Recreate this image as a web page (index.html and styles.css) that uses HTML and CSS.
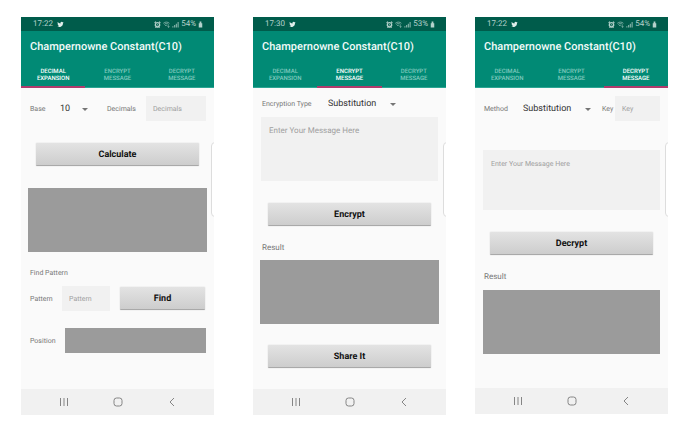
FILE: index.html
```html
<!DOCTYPE html>
<html lang="en">
<head>
<meta charset="utf-8">
<meta name="viewport" content="width=device-width, initial-scale=1">
<title>Champernowne Constant(C10)</title>
<link rel="stylesheet" href="styles.css">
</head>
<body>
<svg class="sprite" aria-hidden="true">
  <symbol id="bird" viewBox="0 0 24 24"><path d="M23 5.1c-.8.4-1.700.6-2.600.7.9-.6 1.600-1.400 2-2.500-.9.500-1.800.9-2.900 1.100A4.500 4.500 0 0 0 11.800 8.500C8 8.300 4.700 6.500 2.500 3.800c-1.200 2.100-.6 4.700 1.400 6-.7 0-1.400-.2-2-.6 0 2.200 1.500 4.100 3.600 4.500-.7.2-1.400.2-2 .1.600 1.800 2.200 3.100 4.200 3.100A9 9 0 0 1 1 18.800 12.800 12.800 0 0 0 20.700 7.400c.9-.6 1.700-1.400 2.300-2.300z"/></symbol>
  <symbol id="alarm" viewBox="0 0 24 24"><path fill-rule="evenodd" d="M1 5l4-4 3 2-5 5zM23 5l-4-4-3 2 5 5zM12 3a10 10 0 0 1 7 17l2 3h-3l-2-1a10 10 0 0 1-8 0l-2 1H3l2-3A10 10 0 0 1 12 3zm0 5a5 5 0 1 0 0 10 5 5 0 0 0 0-10zm-1 2h2v3l2 2-1 1-3-2z"/></symbol>
  <symbol id="wifi" viewBox="0 0 24 24"><path d="M1 8a15 15 0 0 1 21 0M4 12a10 10 0 0 1 15 0M7 16a6 6 0 0 1 8 0M19 15v7M16 19l3 3 3-3" fill="none" stroke="currentColor" stroke-width="3"/></symbol>
  <symbol id="signal" viewBox="0 0 24 24"><path d="M1 18h4v4H1zM7 14h4v8H7zM13 9h4v13h-4zM19 3h4v19h-4z"/></symbol>
  <symbol id="battery" viewBox="0 0 14 24"><path d="M4 2h6v6h3v14H1V8h3z"/></symbol>
  <symbol id="recents" viewBox="0 0 10 10"><path d="M1.500 1v8M5 1v8M8.500 1v8"/></symbol>
  <symbol id="home" viewBox="0 0 10 10"><rect x="1" y="1" width="8" height="8" rx="2.500"/></symbol>
  <symbol id="back" viewBox="0 0 10 10"><path d="M7 1L3 5l4 4"/></symbol>
</svg>
<main class="gallery">

  <section class="phone phone-expansion">
    <header class="status">
      <span>17:22</span><svg class="bird"><use href="#bird"/></svg>
      <span class="status-right"><svg><use href="#alarm"/></svg><svg class="dim"><use href="#wifi"/></svg><svg class="dim"><use href="#signal"/></svg><span>54%</span><svg class="battery"><use href="#battery"/></svg></span>
    </header>
    <h2 class="app-title">Champernowne Constant(C10)</h2>
    <nav class="tabs">
      <button class="tab active">Decimal<br>Expansion</button>
      <button class="tab">Encrypt<br>Message</button>
      <button class="tab">Decrypt<br>Message</button>
    </nav>
    <div class="content">
      <div class="row row-base">
        <label for="base">Base</label>
        <span class="picker picker-short"><select id="base"><option>10</option></select></span>
        <label for="decimals">Decimals</label>
        <input id="decimals" class="field" placeholder="Decimals">
      </div>
      <button class="action">Calculate</button>
      <output class="output"></output>
      <h3 class="section-label small">Find Pattern</h3>
      <div class="row row-pattern">
        <label for="pattern">Pattern</label>
        <input id="pattern" class="field" placeholder="Pattern">
        <button class="action">Find</button>
      </div>
      <div class="row row-position">
        <label for="position">Position</label>
        <output id="position" class="output"></output>
      </div>
    </div>
    <footer class="navbar">
      <button aria-label="Recent apps"><svg><use href="#recents"/></svg></button>
      <button aria-label="Home"><svg><use href="#home"/></svg></button>
      <button aria-label="Back"><svg><use href="#back"/></svg></button>
    </footer>
    <span class="edge-handle"></span>
  </section>

  <section class="phone phone-encrypt">
    <header class="status">
      <span>17:30</span><svg class="bird"><use href="#bird"/></svg>
      <span class="status-right"><svg><use href="#alarm"/></svg><svg class="dim"><use href="#wifi"/></svg><svg class="dim"><use href="#signal"/></svg><span>53%</span><svg class="battery"><use href="#battery"/></svg></span>
    </header>
    <h2 class="app-title">Champernowne Constant(C10)</h2>
    <nav class="tabs">
      <button class="tab">Decimal<br>Expansion</button>
      <button class="tab active">Encrypt<br>Message</button>
      <button class="tab">Decrypt<br>Message</button>
    </nav>
    <div class="content">
      <div class="row row-type">
        <label for="type">Encryption Type</label>
        <span class="picker"><select id="type"><option>Substitution</option></select></span>
      </div>
      <textarea class="message" aria-label="Message" placeholder="Enter Your Message Here"></textarea>
      <button class="action">Encrypt</button>
      <h3 class="section-label">Result</h3>
      <output class="output"></output>
      <button class="action">Share It</button>
    </div>
    <footer class="navbar">
      <button aria-label="Recent apps"><svg><use href="#recents"/></svg></button>
      <button aria-label="Home"><svg><use href="#home"/></svg></button>
      <button aria-label="Back"><svg><use href="#back"/></svg></button>
    </footer>
    <span class="edge-handle"></span>
  </section>

  <section class="phone phone-decrypt">
    <header class="status">
      <span>17:22</span><svg class="bird"><use href="#bird"/></svg>
      <span class="status-right"><svg><use href="#alarm"/></svg><svg class="dim"><use href="#wifi"/></svg><svg class="dim"><use href="#signal"/></svg><span>54%</span><svg class="battery"><use href="#battery"/></svg></span>
    </header>
    <h2 class="app-title">Champernowne Constant(C10)</h2>
    <nav class="tabs">
      <button class="tab">Decimal<br>Expansion</button>
      <button class="tab">Encrypt<br>Message</button>
      <button class="tab active">Decrypt<br>Message</button>
    </nav>
    <div class="content">
      <div class="row row-method">
        <label for="method">Method</label>
        <span class="picker"><select id="method"><option>Substitution</option></select></span>
        <label for="key">Key</label>
        <input id="key" class="field" placeholder="Key">
      </div>
      <textarea class="message" aria-label="Message" placeholder="Enter Your Message Here"></textarea>
      <button class="action">Decrypt</button>
      <h3 class="section-label">Result</h3>
      <output class="output"></output>
    </div>
    <footer class="navbar">
      <button aria-label="Recent apps"><svg><use href="#recents"/></svg></button>
      <button aria-label="Home"><svg><use href="#home"/></svg></button>
      <button aria-label="Back"><svg><use href="#back"/></svg></button>
    </footer>
    <span class="edge-handle"></span>
  </section>

</main>
</body>
</html>
```
FILE: styles.css
```css
* {
  box-sizing: border-box;
}

body {
  margin: 0;
  background: #fff;
  color: #777;
  font: 7px/10px Roboto, "Liberation Sans", sans-serif;
  text-rendering: geometricPrecision;
}

button,
input,
select,
textarea {
  margin: 0;
  padding: 0;
  border: 0;
  border-radius: 0;
  background: none;
  color: inherit;
  font: inherit;
  text-rendering: inherit;
}

h2,
h3 {
  margin: 0;
  font-weight: 400;
}

.sprite {
  display: none;
}

.gallery {
  display: flex;
  align-items: flex-start;
  padding: 17px 20px 11px 21px;
}

.phone {
  position: relative;
  flex: 1;
  min-width: 0;
  overflow: hidden;
  background: #fafafa;
}

.phone-expansion {
  margin-right: 39px;
}

.phone-encrypt {
  margin-right: 29px;
}

/* Status bar, title and tabs */

.status {
  display: flex;
  align-items: center;
  gap: 4px;
  height: 14px;
  padding: 0 11px 0 12px;
  background: #005c4b;
  color: #b5d2cc;
  font-size: 8px;
}

.status svg {
  width: 7px;
  height: 7px;
  fill: currentColor;
}

.status .bird {
  color: #e0eeeb;
}

.status .dim {
  color: #7fb0a6;
}

.status .battery {
  width: 5px;
}

.status-right {
  display: flex;
  align-items: center;
  gap: 2px;
  margin-left: auto;
}

.app-title {
  padding: 8px 9px 6px;
  background: #018a75;
  color: #f4fbfa;
  font-size: 11px;
  font-weight: 500;
  line-height: 16px;
  white-space: nowrap;
}

.tabs {
  display: grid;
  grid-template-columns: repeat(3, 1fr);
  background: #018a75;
}

.tab {
  padding: 7px 0 5px;
  border-bottom: 1px solid #2ba593;
  color: #80c9be;
  font-size: 6px;
  font-weight: 500;
  line-height: 7px;
  text-transform: uppercase;
}

.tab.active {
  padding-bottom: 4px;
  border-bottom: 2px solid #b03a6c;
  color: #fff;
}

/* Form */

.content {
  display: flex;
  flex-direction: column;
  padding: 8px 7px 0;
}

.row {
  display: grid;
  align-items: center;
  padding: 0 1px 0 2px;
}

.row-base {
  grid-template-columns: 30px 47px 39px 1fr;
}

.row-type {
  grid-template-columns: 66px 1fr;
  height: 15px;
}

.row-method {
  grid-template-columns: 39px 79px 13px 1fr;
}

.row-pattern {
  grid-template-columns: 32px 48px 1fr;
  margin-top: 8px;
}

.row-position {
  grid-template-columns: 35px 1fr;
  margin-top: 17px;
}

.picker {
  position: relative;
  width: 70px;
  color: #333;
  font-size: 9px;
}

.picker-short {
  width: 30px;
}

.picker select {
  display: block;
  width: 100%;
  appearance: none;
}

.picker::after {
  content: "";
  position: absolute;
  top: 4px;
  right: 2px;
  border: 3px solid transparent;
  border-top-color: #757575;
  border-bottom: 0;
  pointer-events: none;
}

.field {
  width: 100%;
  min-width: 0;
  height: 25px;
  padding: 0 7px;
  background: #f1f1f1;
}

.message {
  display: block;
  height: 64px;
  margin: 6px 1px 0;
  padding: 9px 8px;
  background: #f1f1f1;
  font-size: 8px;
  resize: none;
}

.field::placeholder,
.message::placeholder {
  color: #a0a0a0;
  opacity: 1;
}

.action {
  height: 23px;
  margin: 22px 8px 0;
  padding-top: 1px;
  border-bottom: 1px solid #a9a9a9;
  border-radius: 1px;
  background: linear-gradient(#e3e3e3, #cdcdcd);
  box-shadow: 0 0 1px #aaa;
  color: #111;
  font-size: 9px;
  font-weight: 700;
}

.output {
  display: block;
  height: 64px;
  background: #9b9b9b;
}

.section-label {
  padding: 0 2px;
  font-size: 8px;
}

.section-label.small {
  margin-top: 16px;
  font-size: 7px;
}

.phone-expansion .content {
  padding-bottom: 36px;
}

.phone-expansion .content > .output {
  margin-top: 22px;
}

.row-pattern .action {
  margin: 0 1px 0 10px;
}

.row-position .output {
  height: 25px;
}

.phone-encrypt .content {
  padding-bottom: 21px;
}

.phone-encrypt .section-label {
  margin: 17px 0 7px;
}

.phone-encrypt .output + .action {
  margin-top: 21px;
}

.phone-decrypt .content {
  padding-bottom: 34px;
}

.phone-decrypt .message {
  height: 60px;
  margin-top: 29px;
  font-size: 7px;
}

.phone-decrypt .section-label {
  margin: 17px 0 8px;
}

.phone-decrypt .output {
  margin: 0 1px;
}

/* System navigation */

.navbar {
  display: grid;
  grid-template-columns: repeat(3, 54px);
  justify-content: center;
  height: 26px;
  background: #f1f1f1;
}

.navbar button {
  display: grid;
  place-items: center;
}

.navbar svg {
  width: 10px;
  height: 10px;
  fill: none;
  stroke: #858585;
  stroke-width: 1;
}

.edge-handle {
  position: absolute;
  top: 125px;
  right: -5px;
  width: 8px;
  height: 75px;
  border: 1px solid #ddd;
  border-radius: 4px;
  background: #fff;
}
```
